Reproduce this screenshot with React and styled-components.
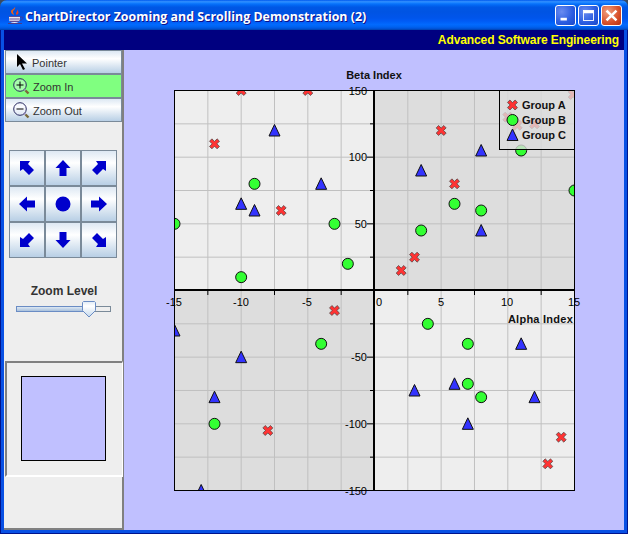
import React from "react";
import styled, { createGlobalStyle } from "styled-components";

const GlobalStyle = createGlobalStyle`
  html, body {
    margin: 0;
    padding: 0;
    background: #3a4a60;
  }
`;

// chart data, alpha / beta
const GROUP_A = [
  [-10, 150], [-5, 150], [-12, 110], [-7, 60], [2, 15], [3, 25], [5, 120], [6, 80],
  [-3, -15], [-8, -105], [14, -110], [13, -130], [10, 130], [10.7, 124], [12, 125], [14.9, 147],
];
const GROUP_B = [
  [-9, 80], [-15, 50], [-3, 50], [-2, 20], [-10, 10], [3.5, 45], [6, 65], [8, 60],
  [11, 105], [15, 75], [4, -25], [7, -40], [-4, -40], [7, -70], [8, -80], [-12, -100],
];
const GROUP_C = [
  [-7.5, 120], [-4, 80], [-10, 65], [-9, 60], [3.5, 90], [8, 105], [8, 45], [11, -40],
  [-15, -30], [-10, -50], [-12, -80], [3, -75], [6, -70], [12, -80], [7, -100], [-13, -150],
];

const px = (a) => 174.5 + (a + 15) * (400 / 30);
const py = (b) => 290.5 - b * (400 / 300);

const X_TICKS = [
  [-15, "-15", 174], [-10, "-10", 241], [-5, "-5", 307], [0, "0", 379],
  [5, "5", 441], [10, "10", 507], [15, "15", 574],
];
const Y_TICKS = [150, 100, 50, -50, -100, -150];
const GRID = [1, 2, 3, 4, 5, 7, 8, 9, 10, 11];

const CrossMark = ({ x, y }) => (
  <polygon
    transform={`translate(${x} ${y})`}
    points="-5,-2.6 -2.6,-5 0,-2.4 2.6,-5 5,-2.6 2.4,0 5,2.6 2.6,5 0,2.4 -2.6,5 -5,2.6 -2.4,0"
    fill="#ff3333"
    stroke="#444"
    strokeWidth="0.7"
  />
);
const CircleMark = ({ x, y }) => <circle cx={x} cy={y} r="5.5" fill="#33ff33" stroke="#111" strokeWidth="1" />;
const TriangleMark = ({ x, y }) => (
  <polygon
    transform={`translate(${x} ${y})`}
    points="0,-6 5.5,5.5 -5.5,5.5"
    fill="#3333ff"
    stroke="#111"
    strokeWidth="1"
  />
);

const Chart = () => (
  <ChartSvg viewBox="124 50 500 480">
    <defs>
      <clipPath id="plot">
        <rect x="174" y="90" width="401" height="401" />
      </clipPath>
    </defs>

    <rect x="174" y="90" width="200" height="200" fill="#eeeeee" />
    <rect x="374" y="90" width="201" height="200" fill="#dddddd" />
    <rect x="174" y="290" width="200" height="201" fill="#dddddd" />
    <rect x="374" y="290" width="201" height="201" fill="#eeeeee" />

    {GRID.map((i) => (
      <g key={i} stroke="#c0c0c0" strokeWidth="1">
        <line x1={174.5 + i * 33.33} y1="90" x2={174.5 + i * 33.33} y2="490" />
        <line x1="174" y1={90.5 + i * 33.33} x2="574" y2={90.5 + i * 33.33} />
      </g>
    ))}

    <g clipPath="url(#plot)">
      {GROUP_A.map(([a, b], i) => <CrossMark key={i} x={px(a)} y={py(b)} />)}
      {GROUP_B.map(([a, b], i) => <CircleMark key={i} x={px(a)} y={py(b)} />)}
      {GROUP_C.map(([a, b], i) => <TriangleMark key={i} x={px(a)} y={py(b)} />)}
    </g>

    <rect x="174.5" y="90.5" width="400" height="400" fill="none" stroke="#000" />
    <rect x="174" y="289" width="401" height="2" fill="#000" />
    <rect x="373" y="90" width="2" height="401" fill="#000" />

    {[-12.5, -7.5, -2.5, 2.5, 7.5, 12.5].map((a) => (
      <line key={a} x1={px(a)} y1="291" x2={px(a)} y2="295" stroke="#000" />
    ))}
    {[125, 75, 25, -25, -75, -125].map((b) => (
      <line key={b} x1="370" y1={py(b)} x2="373" y2={py(b)} stroke="#000" />
    ))}
    {Y_TICKS.map((b) => (
      <line key={b} x1="367" y1={py(b)} x2="373" y2={py(b)} stroke="#000" />
    ))}

    {X_TICKS.map(([a, label, x]) => (
      <ChartLabel key={a} x={x} y="306" textAnchor="middle">{label}</ChartLabel>
    ))}
    {Y_TICKS.map((b) => (
      <ChartLabel key={b} x="367" y={py(b) + 4} textAnchor="end">{b}</ChartLabel>
    ))}

    <ChartTitle x="374" y="79" textAnchor="middle">Beta Index</ChartTitle>
    <ChartTitle x="573" y="323" textAnchor="end" wide>Alpha Index</ChartTitle>

    <rect x="499.5" y="90.5" width="75" height="59" fill="#dddddd" fillOpacity="0.78" stroke="#000" />
    <CrossMark x={512.5} y={105} />
    <CircleMark x={512.5} y={120} />
    <TriangleMark x={512.5} y={135} />
    <ChartTitle x="522" y="109">Group A</ChartTitle>
    <ChartTitle x="522" y="124">Group B</ChartTitle>
    <ChartTitle x="522" y="139">Group C</ChartTitle>
  </ChartSvg>
);

const JavaIcon = () => (
  <svg width="17" height="18" viewBox="0 0 17 18">
    <path d="M8 0c1 2 -2 3 -2 5 0 1 1 2 1 3 -2 -1 -3 -2 -3 -3.500 0 -2 3 -2 4 -4.500z" fill="#e8601c" />
    <path d="M10 2c1 2 -1 3 -1 4.500 0 .7 .5 1 .8 1.500 1.500 -1 2 -2 1.500 -3.500z" fill="#e84020" />
    <path d="M2 9h11v3c0 2.500 -2 4 -5.500 4S2 14.500 2 12z" fill="#e8e8f4" />
    <path d="M2 9.500h11M2.300 12h10.500M3 14.300h9" stroke="#5a4a9a" strokeWidth="1.200" />
    <path d="M13 10h2c1.300 0 1.300 3 -2.500 3.500" fill="none" stroke="#4a3a8a" strokeWidth="1" />
    <path d="M1 16.500h14" stroke="#4a3a8a" strokeWidth="1" />
  </svg>
);

const MinimizeGlyph = () => (
  <svg width="21" height="21" viewBox="0 0 21 21">
    <rect x="5" y="13" width="7" height="3" fill="#fff" />
  </svg>
);
const MaximizeGlyph = () => (
  <svg width="21" height="21" viewBox="0 0 21 21">
    <rect x="5" y="5" width="11" height="11" fill="none" stroke="#fff" strokeWidth="1" />
    <rect x="5" y="5" width="11" height="3" fill="#fff" />
  </svg>
);
const CloseGlyph = () => (
  <svg width="21" height="21" viewBox="0 0 21 21">
    <path d="M5 5l11 11M16 5L5 16" stroke="#fff" strokeWidth="2.800" />
  </svg>
);

const PointerIcon = () => (
  <svg width="12" height="16" viewBox="0 0 12 16">
    <path d="M1 0v13l3 -3 3 6 2 -1 -3 -5.500h5z" fill="#000" />
  </svg>
);

const Magnifier = ({ plus }) => (
  <svg width="17" height="17" viewBox="0 0 17 17">
    <circle cx="7" cy="7" r="6.300" fill="#f4f4ff" fillOpacity="0.35" stroke="#2a2a60" strokeWidth="1" />
    <path d="M3.500 7h7" stroke="#000" strokeWidth="1" />
    {plus && <path d="M7 3.500v7" stroke="#000" strokeWidth="1" />}
    <path d="M11 11l1.500 1.500" stroke="#8a7ab0" strokeWidth="1.500" />
    <path d="M12.500 12.500l3 3" stroke="#7a6a3a" strokeWidth="2.400" />
  </svg>
);

const DIAGONAL = "0,0 10,0 8,3 14,9 9,14 3,8 0,10";
const STRAIGHT = "8,0 15.500,8 11.500,8 11.500,16 4.500,16 4.500,8 0.500,8";

const PadArrow = ({ diagonal, turn }) => (
  <svg width="16" height="16" viewBox="0 0 16 16">
    <polygon
      points={diagonal ? DIAGONAL : STRAIGHT}
      transform={`rotate(${turn} 8 8)${diagonal ? " translate(1 1)" : ""}`}
      fill="#0000cc"
    />
  </svg>
);

const PadDot = () => (
  <svg width="16" height="16" viewBox="0 0 16 16">
    <circle cx="8" cy="8" r="7.500" fill="#0000cc" />
  </svg>
);

const SliderThumb = () => (
  <ThumbSvg width="15" height="17" viewBox="0 0 15 17">
    <defs>
      <linearGradient id="thumb" x1="0" y1="0" x2="0" y2="1">
        <stop offset="0" stopColor="#dfeaf6" />
        <stop offset="0.3" stopColor="#ffffff" />
        <stop offset="1" stopColor="#c4d8ec" />
      </linearGradient>
    </defs>
    <path d="M1.500 .5h11l1 1v8l-6.500 6.500 -6.500 -6.500v-8z" fill="url(#thumb)" stroke="#6a8cc4" />
  </ThumbSvg>
);

const PAD = [
  { diagonal: true, turn: 0 },
  { turn: 0 },
  { diagonal: true, turn: 90 },
  { turn: 270 },
  { dot: true },
  { turn: 90 },
  { diagonal: true, turn: 270 },
  { turn: 180 },
  { diagonal: true, turn: 180 },
];

const App = () => {
  return (
    <>
      <GlobalStyle />
      <Window>
        <TitleBar>
          <JavaIcon />
          <TitleText>ChartDirector Zooming and Scrolling Demonstration (2)</TitleText>
          <WindowControls>
            <ControlBtn><MinimizeGlyph /></ControlBtn>
            <ControlBtn><MaximizeGlyph /></ControlBtn>
            <ControlBtn close><CloseGlyph /></ControlBtn>
          </WindowControls>
        </TitleBar>
        <Client>
          <Banner>Advanced Software Engineering</Banner>
          <Main>
            <Sidebar>
              <ToolButton>
                <IconSlot pointer><PointerIcon /></IconSlot>
                Pointer
              </ToolButton>
              <ToolButton active>
                <IconSlot><Magnifier plus /></IconSlot>
                Zoom In
              </ToolButton>
              <ToolButton>
                <IconSlot><Magnifier /></IconSlot>
                Zoom Out
              </ToolButton>

              <Pad>
                {PAD.map((p, i) => (
                  <PadButton key={i}>
                    {p.dot ? <PadDot /> : <PadArrow diagonal={p.diagonal} turn={p.turn} />}
                  </PadButton>
                ))}
              </Pad>

              <ZoomLabel>Zoom Level</ZoomLabel>
              <Slider>
                <TrackFill />
                <TrackRest />
                <SliderThumb />
              </Slider>

              <Navigator>
                <Viewport />
              </Navigator>
            </Sidebar>
            <Canvas>
              <Chart />
            </Canvas>
          </Main>
        </Client>
      </Window>
    </>
  );
};

const Window = styled.div`
  width: 628px;
  height: 534px;
  display: flex;
  flex-direction: column;
  border-radius: 7px 7px 0 0;
  overflow: hidden;
`;

const TitleBar = styled.div`
  height: 30px;
  flex: none;
  box-sizing: border-box;
  padding: 2px 6px 0 7px;
  display: flex;
  align-items: center;
  background: linear-gradient(
    #0058ee 0%,
    #3593ff 6%,
    #127dff 10%,
    #0369f5 16%,
    #0057e5 24%,
    #0054e3 40%,
    #0055eb 60%,
    #005bf5 70%,
    #026afe 82%,
    #0062ef 90%,
    #0052d6 96%,
    #0040ab 100%
  );
`;

const TitleText = styled.div`
  margin-left: 1px;
  padding-top: 1px;
  font-family: "Open Sans", sans-serif;
  font-weight: 700;
  font-size: 12.4px;
  color: #fff;
  text-shadow: 1px 1px 0 #0f1089;
  white-space: nowrap;
`;

const WindowControls = styled.div`
  margin-left: auto;
  display: flex;
  gap: 2px;
  margin-top: -2px;
`;

const ControlBtn = styled.div`
  width: 21px;
  height: 21px;
  box-sizing: border-box;
  border: 1px solid #fff;
  border-radius: 3px;
  display: flex;
  align-items: center;
  justify-content: center;
  background: ${(props) =>
    props.close
      ? "radial-gradient(circle at 30% 30%, #f0a080, #d8502a 60%, #b83010)"
      : "radial-gradient(circle at 30% 30%, #6a8cf0, #2a5ce0 60%, #1a48c8)"};
`;

const Client = styled.div`
  flex: 1;
  min-height: 0;
  box-sizing: border-box;
  display: flex;
  flex-direction: column;
  padding: 0 3px 3px;
  background: #0850e4;
  border: 1px solid #00138c;
  border-top: 0;
`;

const Banner = styled.div`
  height: 20px;
  flex: none;
  box-sizing: border-box;
  padding-right: 5px;
  background: #000080;
  color: #ffff00;
  font-family: "Liberation Sans", Arial, sans-serif;
  font-weight: 700;
  font-size: 12px;
  letter-spacing: -0.1px;
  line-height: 21px;
  text-align: right;
`;

const Main = styled.div`
  flex: 1;
  min-height: 0;
  display: flex;
`;

const Sidebar = styled.div`
  width: 120px;
  flex: none;
  box-sizing: border-box;
  padding-left: 1px;
  background: #eeeeee;
  border-right: 2px solid #808080;
  border-bottom: 2px solid #808080;
  font-family: "Liberation Sans", Arial, sans-serif;
`;

const ToolButton = styled.div`
  height: 24px;
  box-sizing: border-box;
  padding-top: 1px;
  display: flex;
  align-items: center;
  border: 1px solid #7a8a99;
  color: #333;
  font-size: 11px;
  background: ${(props) =>
    props.active ? "#80ff80" : "linear-gradient(#dde8f3, #ffffff 35%, #b8cfe5)"};
`;

const IconSlot = styled.span`
  width: 27px;
  flex: none;
  display: flex;
  margin-top: -1px;
  padding-left: ${(props) => (props.pointer ? "10px" : "7px")};
  margin-right: ${(props) => (props.pointer ? "-1px" : "0")};
  box-sizing: border-box;
`;

const Pad = styled.div`
  display: grid;
  grid-template-columns: repeat(3, 36px);
  grid-auto-rows: 36px;
  margin: 28px 0 0 4px;
`;

const PadButton = styled.div`
  box-sizing: border-box;
  border: 1px solid #7a8a99;
  display: flex;
  align-items: center;
  justify-content: center;
  background: linear-gradient(#dde8f3, #ffffff 35%, #b8cfe5);
`;

const ZoomLabel = styled.div`
  margin-top: 26px;
  width: 118px;
  text-align: center;
  color: #333;
  font-size: 12px;
  font-weight: 700;
  line-height: 14px;
`;

const Slider = styled.div`
  position: relative;
  height: 16px;
  margin: 3px 0 0 11px;
  width: 95px;
  display: flex;
  align-items: center;
`;

const TrackFill = styled.div`
  width: 68px;
  height: 6px;
  box-sizing: border-box;
  border: 1px solid #6a8cc4;
  background: linear-gradient(#dde8f3, #a8c0dc);
`;

const TrackRest = styled.div`
  flex: 1;
  height: 6px;
  box-sizing: border-box;
  border: 1px solid #7a8a99;
  background: #eeeeee;
`;

const ThumbSvg = styled.svg`
  position: absolute;
  left: 66px;
  top: 0;
`;

const Navigator = styled.div`
  width: 118px;
  height: 116px;
  box-sizing: border-box;
  margin-top: 44px;
  margin-right: -2px;
  padding: 13px 0 0 14px;
  border: 2px solid #808080;
  border-right: 1px solid #ffffff;
  border-bottom: 2px solid #ffffff;
`;

const Viewport = styled.div`
  width: 85px;
  height: 85px;
  box-sizing: border-box;
  background: #c0c0ff;
  border: 1px solid #000;
`;

const Canvas = styled.div`
  flex: 1;
  min-width: 0;
  background: #c0c0ff;
`;

const ChartSvg = styled.svg`
  display: block;
  width: 500px;
  height: 480px;
`;

const ChartLabel = styled.text`
  font-family: "Liberation Sans", Arial, sans-serif;
  font-size: 11px;
  fill: #000;
`;

const ChartTitle = styled.text`
  font-family: "Liberation Sans", Arial, sans-serif;
  font-size: 11px;
  font-weight: 700;
  fill: #111;
  letter-spacing: ${(props) => (props.wide ? "0.25px" : "0")};
`;

export default App;
